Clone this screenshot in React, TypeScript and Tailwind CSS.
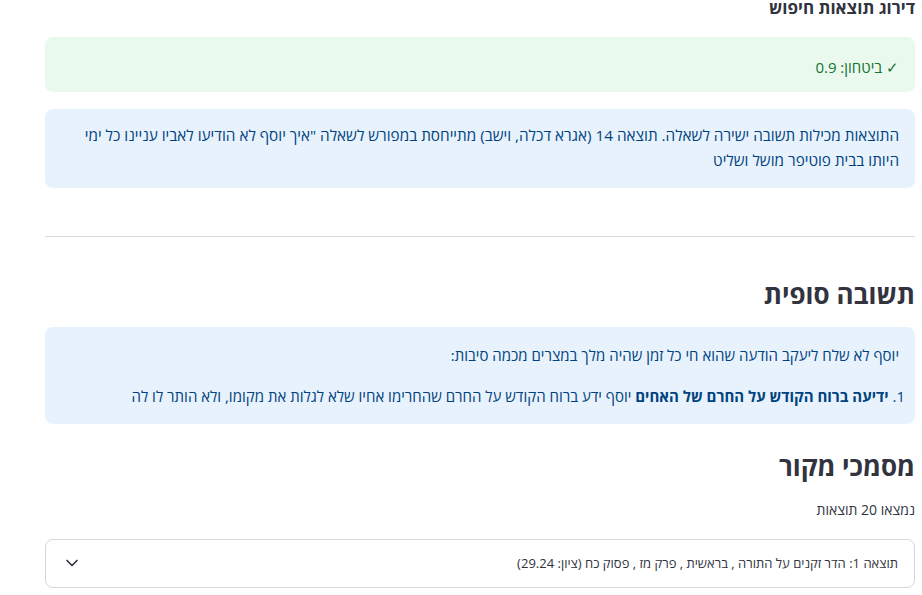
import { ChevronDown } from "lucide-react";

const font = "font-['Open_Sans','Liberation_Sans',sans-serif]";

export default function App() {
  return (
    <div dir="rtl" className={`min-h-screen bg-white pl-[45px] pr-[7px] text-[#31333f] ${font}`}>
      <div className="-mt-[3px] text-[17px] font-bold leading-[22px]">דירוג תוצאות חיפוש</div>

      <div className="mt-[18px] rounded-lg bg-[#e9f9ee] px-4 pb-[13px] pt-[18px] text-[15px] leading-6 text-[#177233]">
        ✓ ביטחון: 0.9
      </div>

      <div className="mt-[17px] rounded-lg bg-[#e8f2fc] px-4 pb-[15px] pt-[14px] text-[15.3px] leading-[25px] text-[#004280]">
        התוצאות מכילות תשובה ישירה לשאלה. תוצאה 14 (אגרא דכלה, וישב) מתייחסת במפורש לשאלה "איך יוסף לא הודיעו לאביו עניינו כל ימי
        היותו בבית פוטיפר מושל ושליט
      </div>

      <hr className="mt-[48px] border-0 border-t border-[#d6d6d9]" />

      <h2 className="mt-[39px] text-[26px] font-bold leading-9">תשובה סופית</h2>

      <div className="mt-[15px] rounded-lg bg-[#e8f2fc] px-4 pb-4 pt-4 text-[15px] leading-6 text-[#004280]">
        <p className="mb-[17px]">יוסף לא שלח ליעקב הודעה שהוא חי כל זמן שהיה מלך במצרים מכמה סיבות:</p>
        <p className="-mr-[6px]">
          1. <span className="font-bold">ידיעה ברוח הקודש על החרם של האחים</span> יוסף ידע ברוח הקודש על החרם שהחרימו אחיו
          שלא לגלות את מקומו, ולא הותר לו לה
        </p>
      </div>

      <h2 className="mt-[24px] text-[26px] font-bold leading-9">מסמכי מקור</h2>

      <p className="mt-4 text-sm leading-5">נמצאו 20 תוצאות</p>

      <div className="mt-[19px] flex items-center justify-between rounded-lg border border-[#d6d6d9] pb-[14px] pl-4 pr-4 pt-[13px] text-[13px] leading-5">
        <span>תוצאה 1: הדר זקנים על התורה , בראשית , פרק מז , פסוק כח (ציון: 29.24)</span>
        <ChevronDown size={20} strokeWidth={2} className="-my-1 text-[#31333f]" />
      </div>
    </div>
  );
}
